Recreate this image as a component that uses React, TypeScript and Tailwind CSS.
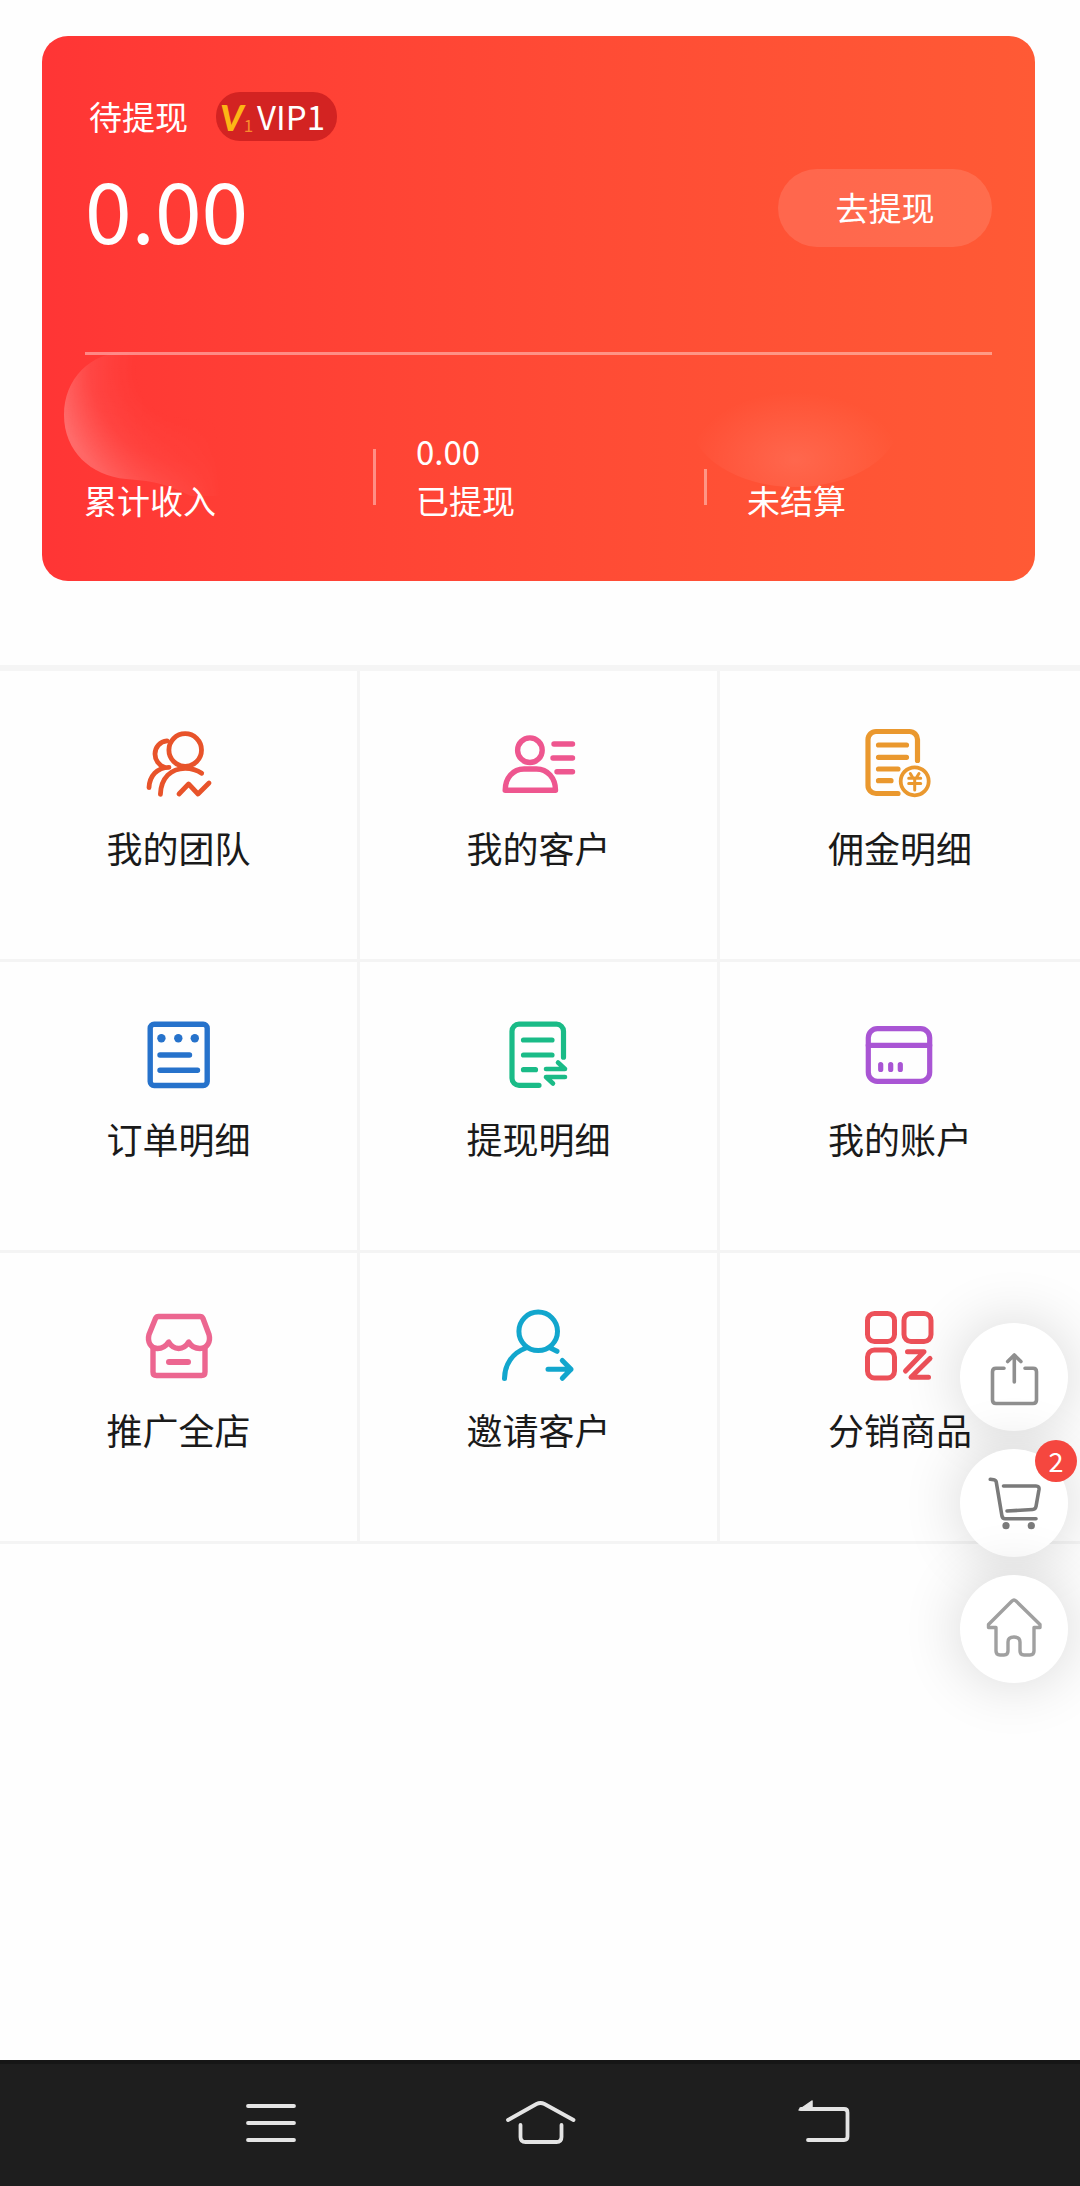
import React from 'react';

interface Stat {
  label: string;
  value?: string;
}

interface MenuItem {
  label: string;
  color: string;
  stroke: number;
  icon: React.ReactNode;
}

const stats: Stat[] = [
  { label: '累计收入' },
  { label: '已提现', value: '0.00' },
  { label: '未结算' },
];

const menuItems: MenuItem[] = [
  {
    label: '我的团队',
    color: 'text-[#e8532a]',
    stroke: 4.8,
    icon: (
      <>
        <circle cx="42.2" cy="22" r="16.3" />
        <path d="M24 12.8C17 13.5 12 19 12 26c0 6 4 11.5 9 13" />
        <path d="M6 59.7C6.5 48 14 39.5 26 39.3" />
        <path d="M17.4 66.3C18 50 28 40.3 42.2 40.3c6 0 11.8 1.7 16.5 5" />
        <path d="M36 66l9.6-10L55 66l11-11" />
      </>
    ),
  },
  {
    label: '我的客户',
    color: 'text-[#ee568f]',
    stroke: 5.4,
    icon: (
      <>
        <circle cx="26.9" cy="22.2" r="12.3" />
        <path d="M2.2 62.3C2.2 50 10 41 21 41h12.5c11 0 19 9 19 21.3z" />
        <path d="M51 16h18.500M50 30h19.500M54 43.700h15.500" />
      </>
    ),
  },
  {
    label: '佣金明细',
    color: 'text-[#ea982e]',
    stroke: 5.2,
    icon: (
      <>
        <path d="M34 65.500H12a8 8 0 0 1-8-8V11.500a8 8 0 0 1 8-8h33.500a8 8 0 0 1 8 8v21" />
        <path d="M14.500 17h28M14.500 29.300h28M14.500 41H34M14.500 52.700H27" />
        <circle cx="50.7" cy="53.3" r="14" strokeWidth="3.8" />
        <path d="M46.300 45.500l2.400 4M55 45.500l-2.500 4M44.700 50.300h12M44.700 55.500h12M50.700 50v12" strokeWidth="3" />
      </>
    ),
  },
  {
    label: '订单明细',
    color: 'text-[#2672cb]',
    stroke: 5.4,
    icon: (
      <>
        <rect x="7.2" y="5.2" width="57" height="61.3" rx="4" />
        <path d="M17 36h29.500M17 51.300h37.500" />
        <g fill="currentColor" stroke="none">
          <circle cx="18.4" cy="19.3" r="4.2" />
          <circle cx="35.3" cy="19.3" r="4.2" />
          <circle cx="51.8" cy="19.3" r="4.2" />
        </g>
      </>
    ),
  },
  {
    label: '提现明细',
    color: 'text-[#1abb87]',
    stroke: 5.2,
    icon: (
      <>
        <path d="M36 66.300H16a7 7 0 0 1-7-7V12.200a7 7 0 0 1 7-7h37.500a7 7 0 0 1 7 7v26" />
        <path d="M20.500 21H49M20.500 36H49M20.500 50.700h12" />
        <path d="M43 50h19l-7-6.500M62 58H43l7 6.500" strokeWidth="4.6" />
      </>
    ),
  },
  {
    label: '我的账户',
    color: 'text-[#a955d4]',
    stroke: 5.2,
    icon: (
      <>
        <rect x="4.3" y="9.700" width="61.400" height="52.600" rx="9" />
        <path d="M4.300 26.300h61.400M16.700 45.500v5M26.700 45.500v5M36.300 45.500v5" />
      </>
    ),
  },
  {
    label: '推广全店',
    color: 'text-[#ec6690]',
    stroke: 5.4,
    icon: (
      <>
        <path d="M15.500 6.500h41.500q2 0 3 2l6 16C68 32 64 38.500 57 38.500c-5 0-9-2.500-11.400-6.500-2.300 4-5.600 6.500-9.900 6.500S28 36 25.700 32C23 36 19 38.500 14.500 38.500 8 38.500 4 32 6 24.500l6.500-16q1-2 3-2z" />
        <path d="M10 38v24q0 3.500 3.500 3.500h45q3.500 0 3.500-3.500V38" />
        <path d="M26 52h19" strokeWidth="6" />
      </>
    ),
  },
  {
    label: '邀请客户',
    color: 'text-[#12a6cd]',
    stroke: 5,
    icon: (
      <>
        <circle cx="35.2" cy="21.3" r="19.3" />
        <path d="M1.500 68.500C1.500 55 9 43 23 38M47.500 38l6.500 3.300" />
        <path d="M45 59.300h23M59.300 50.500l8.700 8.800-8.700 9" />
      </>
    ),
  },
  {
    label: '分销商品',
    color: 'text-[#ec5058]',
    stroke: 5,
    icon: (
      <>
        <rect x="3.5" y="3.5" width="27" height="28" rx="7" />
        <rect x="40" y="3.5" width="27" height="28" rx="7" />
        <rect x="3.5" y="40" width="27" height="28" rx="7" />
        <path d="M43.500 41.700H60L41.500 61M66 48.500L47 67.300h17.500" />
      </>
    ),
  },
];

const Icon: React.FC<{ className: string; stroke: number; viewBox: string; children: React.ReactNode }> = ({
  className,
  stroke,
  viewBox,
  children,
}) => (
  <svg
    className={className}
    viewBox={viewBox}
    fill="none"
    stroke="currentColor"
    strokeWidth={stroke}
    strokeLinecap="round"
    strokeLinejoin="round"
    aria-hidden="true"
  >
    {children}
  </svg>
);

const CardGlow: React.FC = () => (
  <svg className="absolute bottom-0 left-0 h-[232px] w-full" viewBox="0 0 993 232" preserveAspectRatio="none" aria-hidden="true">
    <defs>
      <radialGradient id="blob" gradientUnits="userSpaceOnUse" cx="140" cy="20" r="130">
        <stop offset="0.35" stopColor="#fff" stopOpacity="0" />
        <stop offset="0.7" stopColor="#fff" stopOpacity="0.09" />
        <stop offset="1" stopColor="#fff" stopOpacity="0.28" />
      </radialGradient>
      <linearGradient id="fade" gradientUnits="userSpaceOnUse" x1="20" y1="0" x2="180" y2="0">
        <stop offset="0" stopColor="#fff" />
        <stop offset="0.5" stopColor="#fff" stopOpacity="0.5" />
        <stop offset="1" stopColor="#fff" stopOpacity="0" />
      </linearGradient>
      <mask id="blobMask">
        <rect width="220" height="232" fill="url(#fade)" />
      </mask>
      <radialGradient id="spot" cx="0.5" cy="0.8" r="0.5">
        <stop offset="0" stopColor="#fff" stopOpacity="0.12" />
        <stop offset="0.5" stopColor="#fff" stopOpacity="0.06" />
        <stop offset="1" stopColor="#fff" stopOpacity="0" />
      </radialGradient>
    </defs>
    <path
      d="M85 3C48 3 22 30 22 66s27 61 62 64c30 2 45 7 65 17h50V3z"
      fill="url(#blob)"
      mask="url(#blobMask)"
    />
    <ellipse cx="753" cy="70" rx="105" ry="68" fill="url(#spot)" />
  </svg>
);

const BalanceCard: React.FC = () => (
  <section className="relative mt-9 mr-[45px] ml-[42px] overflow-hidden rounded-[26px] bg-linear-to-r from-[#ff3535] to-[#ff5a35] py-[56px] text-[33px] text-white">
    <CardGlow />
    <div className="relative">
      <div className="px-[43px]">
        <div className="flex items-center gap-7 pl-1">
          <span>待提现</span>
          <span className="flex h-[49px] items-center rounded-3xl bg-[#d32322] pr-3 pl-1">
            <span className="font-[Lato] text-[36px] leading-none font-black text-[#fdb515] italic">V</span>
            <span className="self-end pb-1 text-[17px] text-[#f98a2c]">1</span>
            <span className="ml-1">VIP1</span>
          </span>
        </div>
        <div className="mt-[27px] flex items-center justify-between">
          <span className="text-[84px] leading-[78px]">0.00</span>
          <button type="button" className="h-[78px] w-[214px] rounded-full bg-white/12">
            去提现
          </button>
        </div>
        <hr className="mt-[105px] border-t-[3px] border-white/40" />
      </div>
      <div className="mt-[72px] grid grid-cols-3 items-end leading-[49px]">
        {stats.map((stat, index) => (
          <div key={stat.label} className="flex items-end">
            {index > 0 && (
              <span className={stat.value ? 'mb-5 h-14 w-[3px] bg-white/40' : 'mb-5 h-9 w-[3px] bg-white/40'} />
            )}
            <div className={index > 0 ? 'pl-10' : 'pl-[42px]'}>
              {stat.value && <p>{stat.value}</p>}
              <p>{stat.label}</p>
            </div>
          </div>
        ))}
      </div>
    </div>
  </section>
);

const MenuGrid: React.FC = () => (
  <nav className="mt-[84px] grid grid-cols-3 border-t-[6px] border-[#f5f5f5]">
    {menuItems.map((item) => (
      <a
        key={item.label}
        href="#"
        className="flex flex-col items-center gap-5 border-r-[3px] border-b-[3px] border-[#f4f4f4] pt-[57px] pb-[85px] nth-[3n]:border-r-0"
      >
        <Icon className={`size-[72px] overflow-visible ${item.color}`} stroke={item.stroke} viewBox="0 0 72 72">
          {item.icon}
        </Icon>
        <span className="text-[36px] leading-[54px] text-[#1a1a1a]">{item.label}</span>
      </a>
    ))}
  </nav>
);

const floatButton = 'relative size-[108px] rounded-full bg-white shadow-[0_0_60px_rgba(0,0,0,0.16)]';

const FloatingActions: React.FC = () => (
  <div className="absolute right-3 bottom-[503px] flex flex-col gap-[18px]">
    <button type="button" aria-label="分享" className={floatButton}>
      <Icon className="size-full text-[#8f8f8f]" stroke={3.6} viewBox="0 0 108 108">
        <path d="M44 45.300H36q-3.500 0-3.500 3.500V77q0 3.500 3.500 3.500h37q3.500 0 3.500-3.500V48.800q0-3.500-3.500-3.500h-8" />
        <path d="M54.300 59V32M47.700 38.500l6.600-6.500 6.600 6.500" />
      </Icon>
    </button>
    <button type="button" aria-label="购物车" className={floatButton}>
      <Icon className="size-full text-[#7a7a7a]" stroke={3.6} viewBox="0 0 108 108">
        <path d="M30.300 30.300l3.500.4q2 .3 2.500 2.500l5.700 34q.5 2.500 3 2.500h31" />
        <path d="M43.500 37H76q3.500 0 3 3.500l-3 17q-.5 2.800-3.300 3L47 62" />
        <circle cx="46" cy="76.7" r="3.6" fill="currentColor" stroke="none" />
        <circle cx="71.3" cy="76.7" r="3.6" fill="currentColor" stroke="none" />
      </Icon>
      <span className="absolute -top-[9px] -right-[9px] flex size-[42px] items-center justify-center rounded-full bg-[#f5473f] text-[27px] text-white">
        2
      </span>
    </button>
    <button type="button" aria-label="首页" className={floatButton}>
      <Icon className="size-full text-[#a0a0a0]" stroke={3.4} viewBox="0 0 108 108">
        <path d="M52 26L28.500 49.500v3H36V76q0 4 4 4h4q4 0 4-4v-9q0-5 6-5t6 5v9q0 4 4 4h6q4 0 4-4V52.500h6v-3L56 26q-2-2-4 0z" />
      </Icon>
    </button>
  </div>
);

const SystemBar: React.FC = () => (
  <footer className="flex h-[126px] items-center justify-center border-t-4 border-[#161616] bg-[#1e1e1e] text-[#e4e4e4]">
    <button type="button" aria-label="菜单" className="flex w-1/4 justify-center">
      <Icon className="h-[60px] w-20" stroke={3.8} viewBox="0 0 80 60">
        <path d="M18 11h46M18 28h46M18 45h46" />
      </Icon>
    </button>
    <button type="button" aria-label="主屏幕" className="flex w-1/4 justify-center">
      <Icon className="h-[60px] w-20" stroke={3.8} viewBox="0 0 80 60">
        <path d="M8 25L36.500 9q4-2 8 0L73.500 25" />
        <path d="M20.500 30v12q0 5 5 5h31q5 0 5-5V30" />
      </Icon>
    </button>
    <button type="button" aria-label="返回" className="flex w-1/4 justify-center">
      <Icon className="h-[60px] w-20" stroke={3.8} viewBox="0 0 80 60">
        <path d="M31 14h43q3.500 0 3.500 3.500v24q0 3.500-3.500 3.500H38" />
        <path d="M29 15L42 6v9z" fill="currentColor" strokeWidth="1.5" />
      </Icon>
    </button>
  </footer>
);

const App: React.FC = () => {
  return (
    <div className="relative flex min-h-screen flex-col bg-[#fefefe] font-['Noto_Sans_CJK_SC',sans-serif]">
      <main className="grow">
        <BalanceCard />
        <MenuGrid />
      </main>
      <FloatingActions />
      <SystemBar />
    </div>
  );
};

export default App;
